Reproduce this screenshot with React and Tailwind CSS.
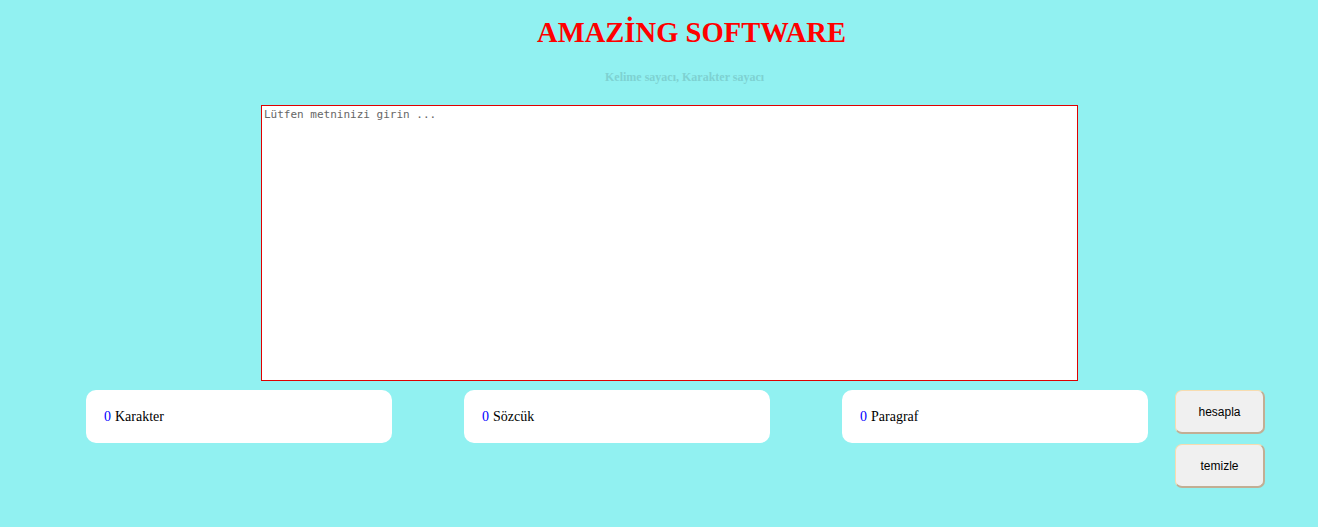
import React from "react";

const Counter = ({ label }) => (
  <div className="w-[306px] h-[53px] bg-white rounded-[10px] flex items-center pl-[18px] text-[14px] text-black">
    <span className="text-[#0000ff]">0</span>
    <span className="ml-[4px]">{label}</span>
  </div>
);

const Button = ({ children }) => (
  <button className="w-[90px] h-[44px] bg-[#f0f0f0] rounded-[7px] border-t border-l border-t-[#f7dcb0] border-l-[#f7dcb0] border-b-2 border-r-2 border-b-[#c2ae94] border-r-[#c2ae94] text-[12px] text-black font-['Liberation_Sans',Arial,sans-serif]">
    {children}
  </button>
);

export default function App() {
  return (
    <div className="w-full h-[527px] bg-[#91f1f1] font-['Liberation_Serif','Times_New_Roman',serif] overflow-hidden">
      <div className="pl-[537px] pt-[16px]">
        <h1 className="text-[28.6px] leading-[34px] font-bold text-[#ff0000] whitespace-nowrap">AMAZİNG SOFTWARE</h1>
      </div>
      <div className="pl-[605px] pt-[19px]">
        <p className="text-[12px] leading-[16px] font-bold text-[#7ed2d2] whitespace-nowrap">Kelime sayacı, Karakter sayacı</p>
      </div>
      <div className="pl-[261px] pt-[20px]">
        <textarea
          placeholder="Lütfen metninizi girin ..."
          className="block w-[817px] h-[276px] bg-white border border-solid border-[#e00000] resize-none outline-none px-[2px] py-[2px] text-[11px] leading-[14px] font-['DejaVu_Sans_Mono',monospace] placeholder:text-[#666666]"
        />
      </div>
      <div className="flex items-start pl-[86px] pt-[9px]">
        <Counter label="Karakter" />
        <div className="w-[72px]" />
        <Counter label="Sözcük" />
        <div className="w-[72px]" />
        <Counter label="Paragraf" />
        <div className="flex flex-col gap-[10px] ml-[27px]">
          <Button>hesapla</Button>
          <Button>temizle</Button>
        </div>
      </div>
    </div>
  );
}
